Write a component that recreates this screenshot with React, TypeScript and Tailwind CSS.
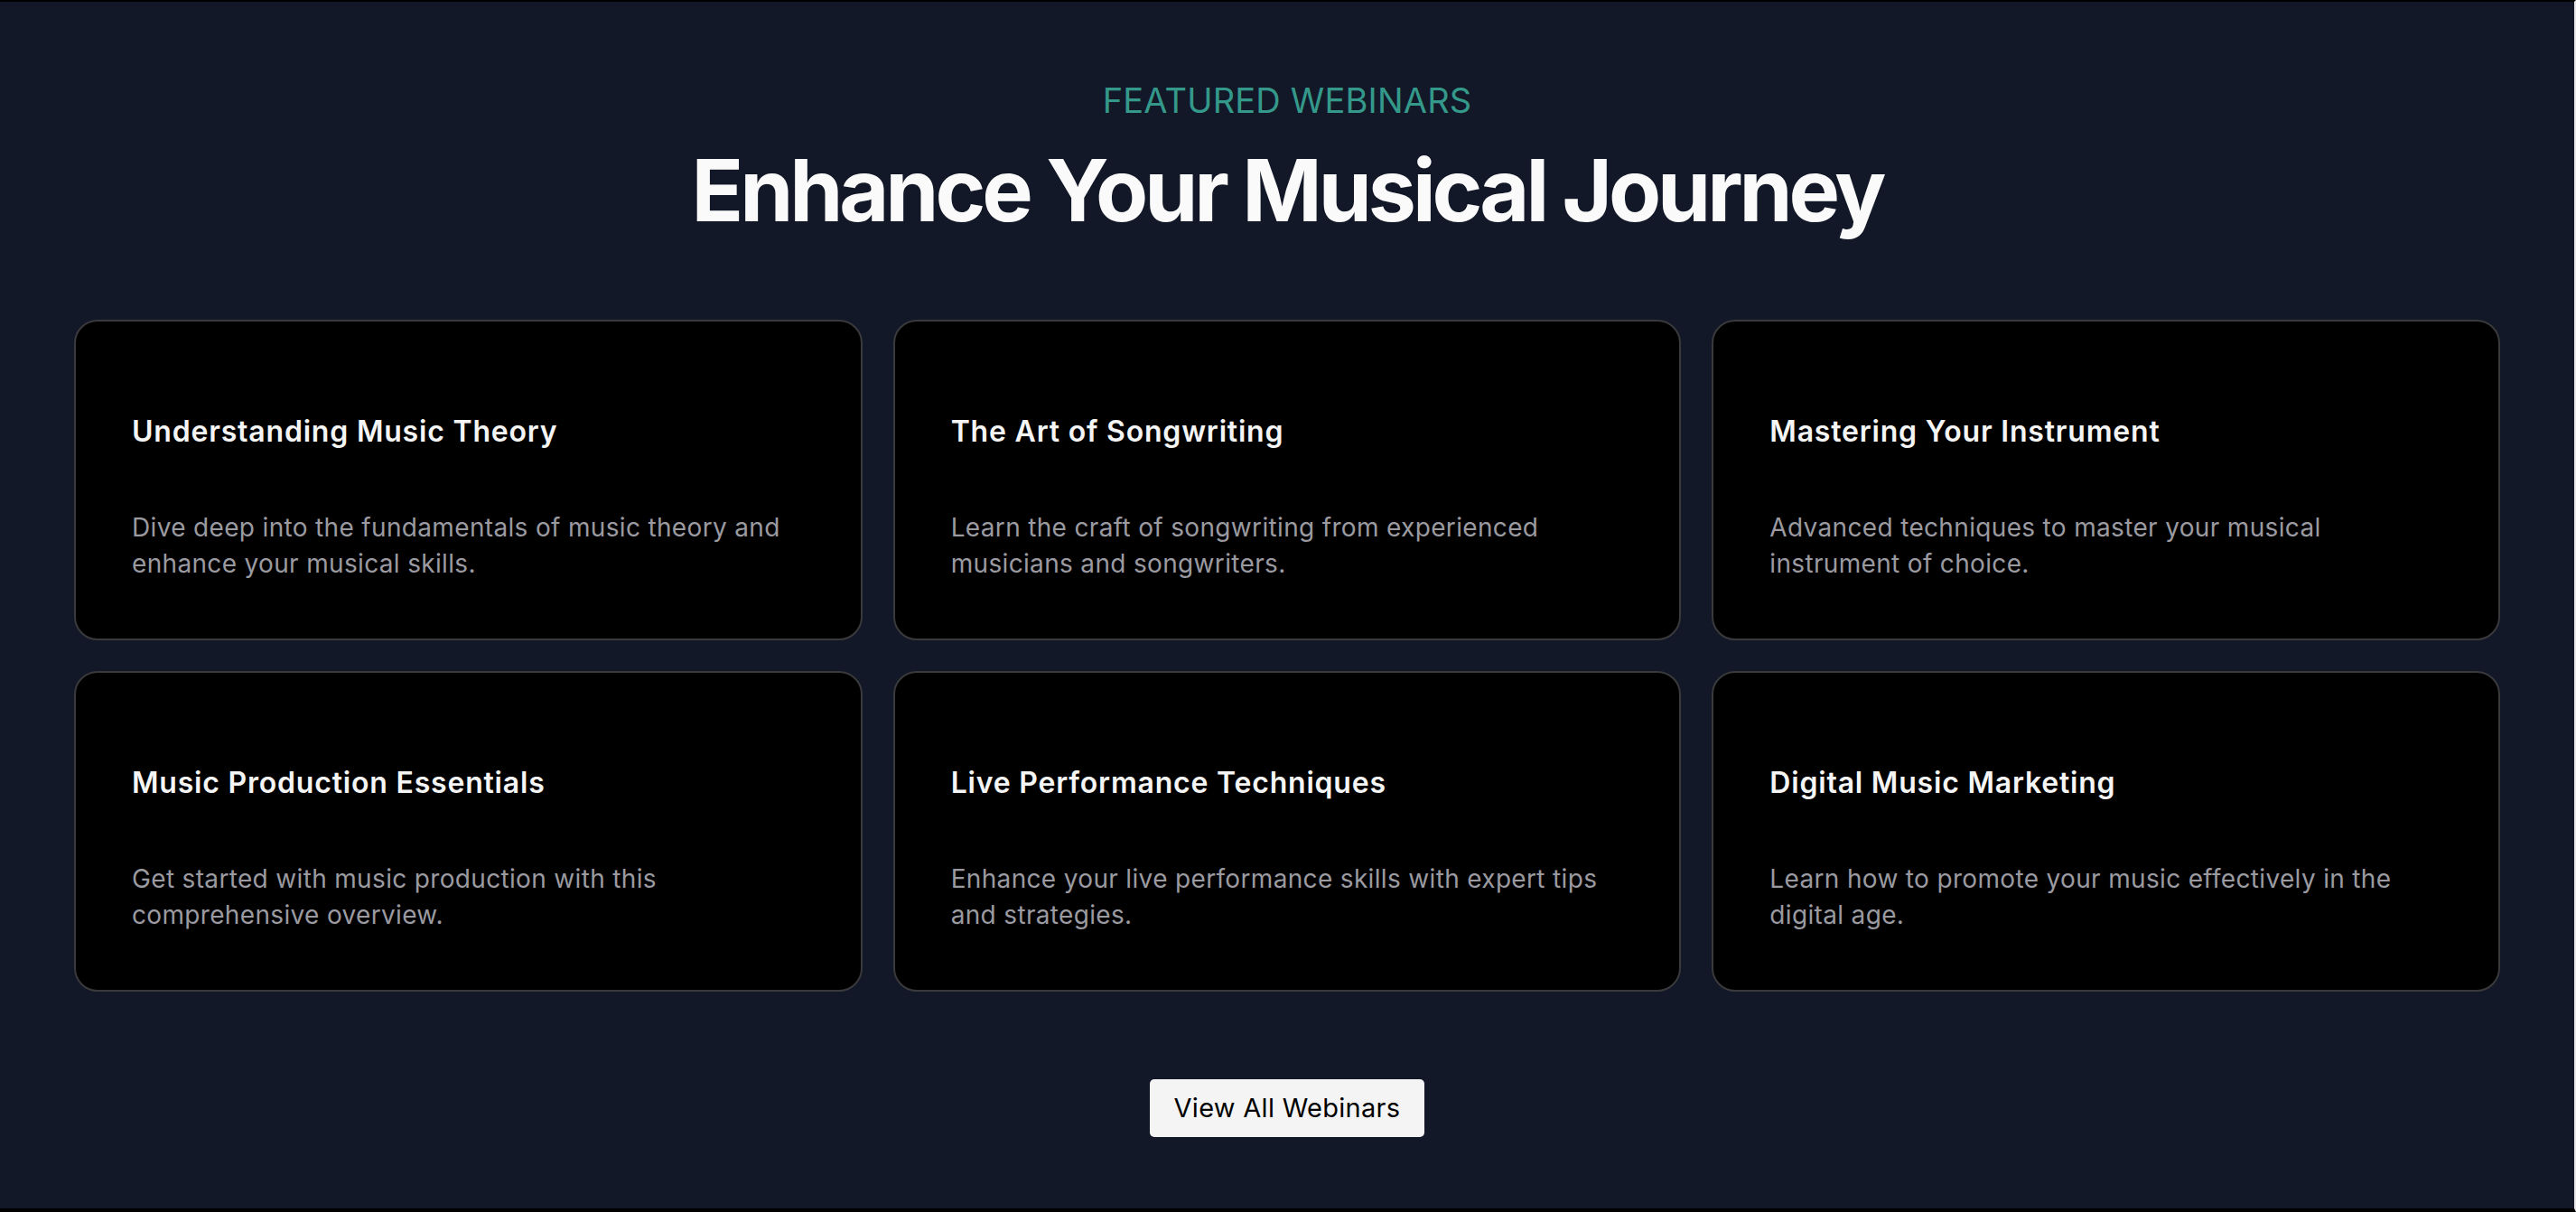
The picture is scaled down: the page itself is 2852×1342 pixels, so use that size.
import React from 'react';

const webinars = [
  {
    title: 'Understanding Music Theory',
    description: 'Dive deep into the fundamentals of music theory and enhance your musical skills.',
  },
  {
    title: 'The Art of Songwriting',
    description: 'Learn the craft of songwriting from experienced musicians and songwriters.',
  },
  {
    title: 'Mastering Your Instrument',
    description: 'Advanced techniques to master your musical instrument of choice.',
  },
  {
    title: 'Music Production Essentials',
    description: 'Get started with music production with this comprehensive overview.',
  },
  {
    title: 'Live Performance Techniques',
    description: 'Enhance your live performance skills with expert tips and strategies.',
  },
  {
    title: 'Digital Music Marketing',
    description: 'Learn how to promote your music effectively in the digital age.',
  },
];

const WebinarCard = ({ title, description }: { title: string; description: string }) => (
  <div className="bg-black border-2 border-[#3a3a3d] rounded-[26px] pt-[102px] px-[62px] pb-[63px]">
    <h3 className="text-[32px] leading-[40px] font-semibold text-[#f5f5f5] tracking-[0.025em]">{title}</h3>
    <p className="mt-[66px] text-[28px] leading-[40px] text-[#9a9aa0] tracking-[0.012em]">{description}</p>
  </div>
);

export default function App() {
  return (
    <div
      className="h-[1342px] overflow-hidden bg-[#121827] border-t-2 border-b-4 border-black border-r-2 border-r-[#e8e8e8] flex flex-col items-center pt-[85px] px-[82px]"
      style={{ fontFamily: 'Inter, "Noto Sans", sans-serif' }}
    >
      <p className="text-[38px] leading-[48px] text-[#34998a] tracking-[0.005em]">FEATURED WEBINARS</p>
      <h2 className="mt-[28px] text-[95px] leading-[96px] font-bold text-[#fafafa] tracking-[-0.043em]">
        Enhance Your Musical Journey
      </h2>

      <div className="mt-[95px] w-full grid grid-cols-3 gap-[34px]">
        {webinars.map((w) => (
          <WebinarCard key={w.title} title={w.title} description={w.description} />
        ))}
      </div>

      <button className="mt-[97px] h-[64px] px-[27px] bg-[#f4f4f4] rounded-[5px] text-[29px] tracking-[0.01em] text-black">
        View All Webinars
      </button>
    </div>
  );
}
